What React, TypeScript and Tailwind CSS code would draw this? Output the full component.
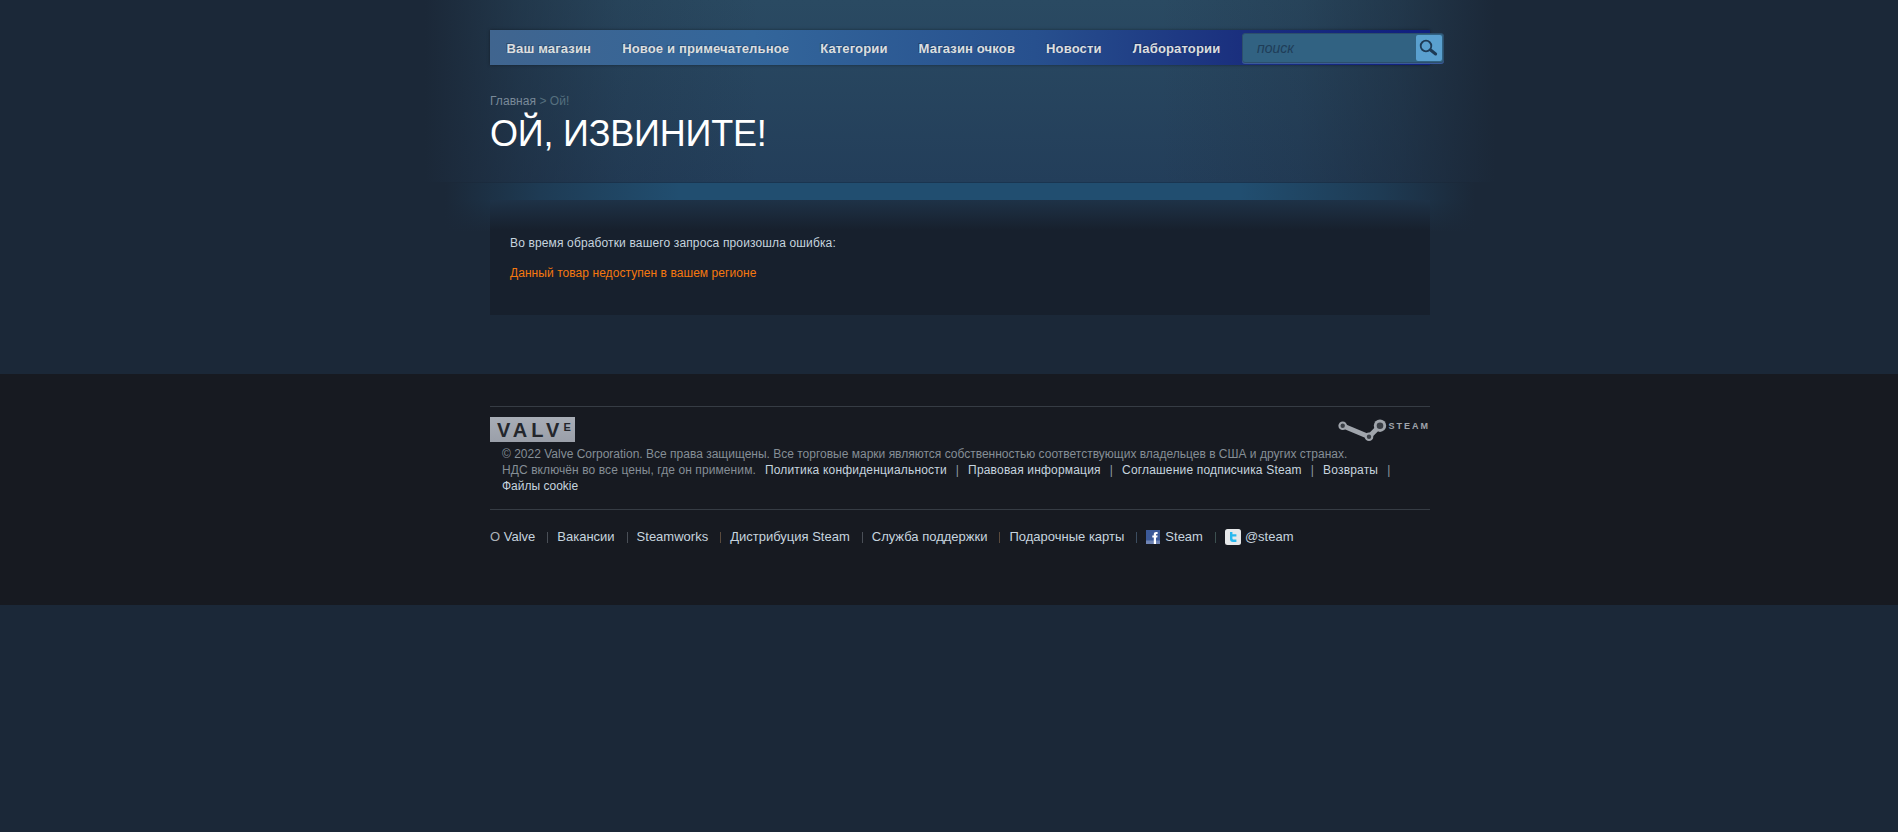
const navItems = [
  "Ваш магазин",
  "Новое и примечательное",
  "Категории",
  "Магазин очков",
  "Новости",
  "Лаборатории",
];

const legalLinks = [
  "Политика конфиденциальности",
  "Правовая информация",
  "Соглашение подписчика Steam",
  "Возвраты",
];

function SearchIcon() {
  return (
    <svg width="20" height="20" viewBox="0 0 20 20" fill="none">
      <circle cx="7" cy="8" r="5.3" stroke="#1d3a55" strokeWidth="1.8" />
      <path d="M11.6 12 L16.6 16" stroke="#1d3a55" strokeWidth="3" strokeLinecap="round" />
    </svg>
  );
}

function SteamLogo() {
  return (
    <div className="mt-[2px] flex items-start">
      <svg width="51" height="23" viewBox="0 0 51 23" fill="none">
        <path d="M4.7 6.7 L31 17.7 L42 6.7" stroke="#a0a5ac" strokeWidth="5" strokeLinejoin="round" />
        <circle cx="4.7" cy="6.7" r="4.3" fill="#a0a5ac" />
        <circle cx="4.7" cy="6.7" r="2.2" fill="#3a3f46" />
        <circle cx="31" cy="17.7" r="4.3" fill="#a0a5ac" />
        <circle cx="31" cy="17.7" r="2.2" fill="#3a3f46" />
        <circle cx="42" cy="6.7" r="6.2" fill="#a0a5ac" />
        <circle cx="42" cy="6.7" r="3.3" fill="#3a3f46" />
      </svg>
      <span className="mt-[1px] text-[9px] leading-[12px] font-bold tracking-[2px] text-[#a0a5ac]">STEAM</span>
    </div>
  );
}

function FacebookIcon() {
  return (
    <svg width="14" height="14" viewBox="0 0 14 14">
      <rect width="14" height="14" fill="#3b5998" />
      <rect y="10.5" width="14" height="3.5" fill="#6f84b4" />
      <path d="M7.8 14 V7.6 H6.3 V5.4 H7.8 V4.2 C7.8 2.6 8.7 1.9 10.2 1.9 H11.6 V4 H10.7 C10.1 4 10 4.2 10 4.8 V5.4 H11.6 L11.3 7.6 H10 V14 Z" fill="#ffffff" />
    </svg>
  );
}

function TwitterIcon() {
  return (
    <svg width="16" height="16" viewBox="0 0 16 16">
      <rect width="16" height="16" rx="2.5" fill="#e6e8ea" />
      <path d="M5 3 H7.4 V5.2 H11.4 V7.5 H7.4 V9.3 C7.4 10.2 8 10.6 8.8 10.6 H11.4 V13 H8 C6 13 5 11.8 5 10 Z" fill="#27b8ee" />
    </svg>
  );
}

function Sep({ tone }: { tone: string }) {
  return <span className={`mr-[9px] ml-[12px] inline-block h-[11px] w-px ${tone}`} />;
}

export default function App() {
  return (
    <div className="min-h-[832px] bg-[#1b2838] font-['Liberation_Sans',Arial,sans-serif] text-[12px]">
      <div className="h-[182px] bg-[linear-gradient(90deg,#1b2838_425px,rgba(27,40,56,0.55)_520px,rgba(27,40,56,0.2)_620px,rgba(27,40,56,0)_760px,rgba(27,40,56,0)_1160px,rgba(27,40,56,0.2)_1300px,rgba(27,40,56,0.55)_1400px,#1b2838_1495px),linear-gradient(180deg,#2a4a62_0px,#233e5a_182px)]">
        <div className="mx-auto w-[962px] pt-[30px] pl-[22px]">
          <div className="relative flex h-[35px] w-[940px] bg-[linear-gradient(90deg,#40658f_0%,#33669b_28%,#27508e_58%,#1a2f7e_80%,#101f80_100%)] pl-[1px] shadow-[0_0_3px_rgba(0,0,0,0.4)]">
            {navItems.map((item) => (
              <span
                key={item}
                className="px-[15.5px] text-[13px] leading-[37px] font-bold tracking-[0.16px] text-[#dcdedf] [text-shadow:-1px_-1px_0_rgba(0,0,0,0.25)]"
              >
                {item}
              </span>
            ))}
            <div className="absolute top-[3px] left-[752px] flex h-[30px] w-[202px] items-center rounded-[3px] border border-[#2c4f6c] bg-[#316282] pr-px shadow-[0_1px_0_#3a5a9a]">
              <span className="flex-1 pl-[14px] text-[14px] text-[#1f3d58] italic">поиск</span>
              <span className="flex h-[26px] w-[26px] items-center justify-center rounded-[2px] bg-[#5aa0cf]">
                <SearchIcon />
              </span>
            </div>
          </div>
          <div className="mt-[28px] leading-[16px] tracking-[0.05px] text-[#7a8a99]">
            Главная <span className="text-[#56707f]">&gt; Ой!</span>
          </div>
          <h1 className="mt-[5px] text-[36px] leading-[40px] font-normal tracking-[-0.2px] text-white">ОЙ, ИЗВИНИТЕ!</h1>
        </div>
      </div>

      <div className="h-[192px] bg-[linear-gradient(90deg,#1b2838_445px,rgba(27,40,56,0.5)_540px,rgba(27,40,56,0)_680px,rgba(27,40,56,0)_1240px,rgba(27,40,56,0.5)_1380px,#1b2838_1475px),linear-gradient(180deg,#1a3550_0px,#1a3550_1px,#214e70_1px,#214e70_18px,#1b2838_50px)] pt-[18px]">
        <div className="mx-auto w-[962px] pl-[22px]">
          <div className="h-[115px] w-[940px] bg-[linear-gradient(180deg,#1e3247_0px,#17202d_30px,#17202d_100%)] px-5 pt-[36px]">
            <p className="leading-[14px] tracking-[0.14px] text-[#c6d4df]">Во время обработки вашего запроса произошла ошибка:</p>
            <p className="mt-[16px] leading-[14px] tracking-[0.06px] text-[#f5780f]">Данный товар недоступен в вашем регионе</p>
          </div>
        </div>
      </div>

      <footer className="h-[231px] bg-[#171a21] pt-[32px]">
        <div className="mx-auto w-[962px] pl-[22px]">
          <div className="w-[940px] border-t border-[#363c44] pt-[10px] pb-[15px]">
            <div className="flex items-start justify-between">
              <div className="flex h-[25px] w-[85px] items-center bg-[linear-gradient(180deg,#a8adb6,#9a9fa9)] pl-[7px] text-[20px] leading-none font-bold tracking-[4px] text-[#23262c]">
                VALV<span className="mt-[5px] self-start text-[11px] leading-[11px]">E</span>
              </div>
              <SteamLogo />
            </div>
            <div className="mt-[4px] pl-3 leading-[16px] text-[#858e96]">
              <div>
                © 2022 Valve Corporation. Все права защищены. Все торговые марки являются собственностью соответствующих владельцев в США и других странах.
              </div>
              <div className="tracking-[0.09px]">
                НДС включён во все цены, где он применим.
                <span className="ml-[9px] tracking-[0.18px] text-[#c6d4df]">
                  {legalLinks.map((link) => (
                    <span key={link}>
                      {link}
                      <span className="mx-[9px] text-[#8f98a0]">|</span>
                    </span>
                  ))}
                </span>
              </div>
              <div className="text-[#c6d4df]">Файлы cookie</div>
            </div>
          </div>
          <div className="flex w-[940px] items-center border-t border-[#363c44] pt-[19px] text-[13px] leading-[16px] text-[#c6d4df]">
            <span className="text-[#acb2b8]">О&nbsp;</span>Valve
            <Sep tone="bg-[#4a4f57]" />
            Вакансии
            <Sep tone="bg-[#4a4f57]" />
            Steamworks
            <Sep tone="bg-[#5a4a3c]" />
            Дистрибуция Steam
            <Sep tone="bg-[#4a4f57]" />
            Служба поддержки
            <Sep tone="bg-[#5a4a3c]" />
            Подарочные карты
            <Sep tone="bg-[#3c4d60]" />
            <FacebookIcon />
            <span className="ml-[5px]">Steam</span>
            <Sep tone="bg-[#3c5050]" />
            <TwitterIcon />
            <span className="ml-[4px]">@steam</span>
          </div>
        </div>
      </footer>
    </div>
  );
}
